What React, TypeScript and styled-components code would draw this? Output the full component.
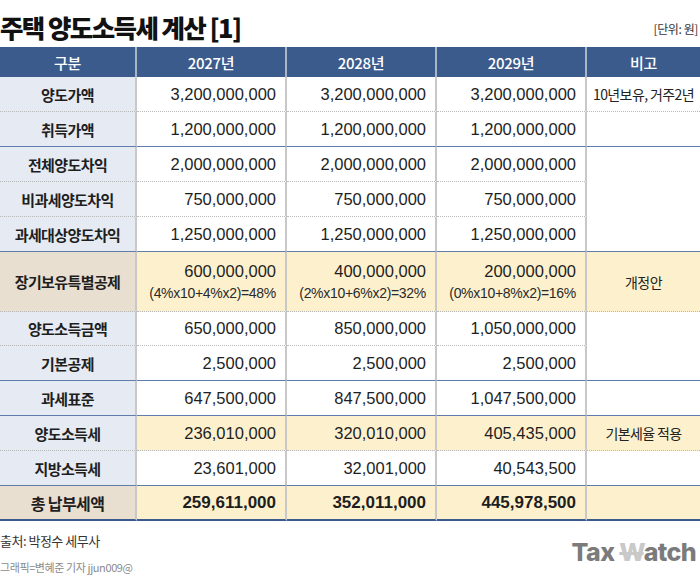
import React from 'react';
import styled, { createGlobalStyle } from 'styled-components';

const GlobalStyle = createGlobalStyle`
    body {
        margin: 0;
        background: #fff;
        font-family: 'Liberation Sans', 'Noto Sans CJK KR', sans-serif;
        color: #222;
    }
`;

const Page = styled.div`
    width: 700px;
    height: 587px;
    overflow: hidden;
    background: #fff;
`;

const TitleBar = styled.div`
    height: 47px;
    display: flex;
    align-items: flex-end;
    justify-content: space-between;
    box-sizing: border-box;
    padding-bottom: 8px;
`;

const Title = styled.h1`
    margin: 0;
    font-family: 'Noto Sans CJK KR', sans-serif;
    font-size: 25.5px;
    font-weight: 900;
    letter-spacing: -1.6px;
    line-height: 1;
    color: #111;
`;

const Unit = styled.span`
    font-family: 'Noto Sans CJK KR', sans-serif;
    font-size: 12px;
    letter-spacing: -0.4px;
    color: #333;
    padding-right: 2px;
    margin-bottom: 2px;
`;

const Grid = styled.div`
    display: grid;
    grid-template-columns: 137px 150px 150px 150px 113px;
    grid-template-rows: 30px 35px 35px 35px 35px 35px 60px 34px 35px 35px 35px 35px 35px;
`;

const HeadCell = styled.div<{ $last?: boolean }>`
    background: #3c5b8d;
    color: #fff;
    font-family: 'Noto Sans CJK KR', sans-serif;
    font-size: 15px;
    font-weight: 500;
    letter-spacing: -0.3px;
    display: flex;
    align-items: center;
    justify-content: center;
    box-sizing: border-box;
    border-right: ${(p) => (p.$last ? 'none' : '2px solid #aab5c6')};
`;

type Line = 'dot' | 'blue' | 'end';
type Tone = 'plain' | 'label' | 'beige' | 'yellow';

const lineStyle = (l: Line) =>
    l === 'dot' ? '1px dotted #b9b9b9' : l === 'blue' ? '1.5px solid #5f7cab' : '2px solid #3c5b8d';

const toneBg = (t: Tone) =>
    t === 'label' ? '#e6ebf3' : t === 'beige' ? '#e9dfd0' : t === 'yellow' ? '#fdf1cd' : '#fff';

const Cell = styled.div<{ $line: Line; $tone: Tone; $last?: boolean; $span?: number }>`
    box-sizing: border-box;
    background: ${(p) => toneBg(p.$tone)};
    border-bottom: ${(p) => lineStyle(p.$line)};
    border-right: ${(p) => (p.$last ? 'none' : '2px solid #c8c8c8')};
    grid-row: ${(p) => (p.$span ? `span ${p.$span}` : 'auto')};
    display: flex;
    flex-direction: column;
    justify-content: center;
`;

const Label = styled(Cell)<{ $strong?: boolean }>`
    align-items: center;
    font-family: 'Noto Sans CJK KR', sans-serif;
    font-size: ${(p) => (p.$strong ? '16px' : '15px')};
    font-weight: 700;
    letter-spacing: -0.6px;
    color: #1e1e1e;
`;

const NumCell = styled(Cell)<{ $bold?: boolean }>`
    align-items: flex-end;
    padding-right: 9px;
    font-size: ${(p) => (p.$bold ? '17px' : '16.5px')};
    font-weight: ${(p) => (p.$bold ? 700 : 400)};
    color: #1e1e1e;
`;

const Formula = styled.span`
    font-size: 14px;
    letter-spacing: -0.3px;
    margin-top: 4px;
    color: #2a2a2a;
`;

const Note = styled(Cell)`
    align-items: center;
    font-family: 'Noto Sans CJK KR', 'Liberation Sans', sans-serif;
    font-size: 14px;
    letter-spacing: -0.6px;
    color: #222;
    white-space: nowrap;
`;

const Footer = styled.div`
    display: grid;
    grid-template-columns: 1fr auto;
    align-items: end;
    padding-top: 10px;
`;

const Credits = styled.div`
    display: flex;
    flex-direction: column;
    gap: 9px;
`;

const Source = styled.span`
    font-family: 'Noto Sans CJK KR', sans-serif;
    font-size: 13px;
    letter-spacing: -0.5px;
    color: #333;
`;

const Byline = styled.span`
    font-family: 'Noto Sans CJK KR', sans-serif;
    font-size: 11px;
    letter-spacing: -0.4px;
    color: #8a8a8a;
`;

const Logo = styled.div`
    font-family: 'Inter', 'Liberation Sans', sans-serif;
    font-size: 25px;
    font-weight: 800;
    letter-spacing: -0.6px;
    color: #7b7b7b;
    line-height: 1;
    padding: 0 4px 10px 0;
    white-space: pre;
`;

const LogoW = styled.span`
    color: #c9c9c9;
    text-decoration: line-through;
    text-decoration-thickness: 3px;
    text-decoration-color: #c9c9c9;
`;

type Row = {
    label: string;
    values: string[];
    line: Line;
    labelTone: Tone;
    tone: Tone;
    formulas?: string[];
    bold?: boolean;
    note?: { text: string; span?: number; line: Line } | null;
};

const rows: Row[] = [
    { label: '양도가액', values: ['3,200,000,000', '3,200,000,000', '3,200,000,000'], line: 'dot', labelTone: 'label', tone: 'plain', note: { text: '10년보유, 거주2년', line: 'dot' } },
    { label: '취득가액', values: ['1,200,000,000', '1,200,000,000', '1,200,000,000'], line: 'blue', labelTone: 'label', tone: 'plain', note: { text: '', line: 'blue' } },
    { label: '전체양도차익', values: ['2,000,000,000', '2,000,000,000', '2,000,000,000'], line: 'dot', labelTone: 'label', tone: 'plain', note: { text: '', span: 3, line: 'blue' } },
    { label: '비과세양도차익', values: ['750,000,000', '750,000,000', '750,000,000'], line: 'dot', labelTone: 'label', tone: 'plain', note: null },
    { label: '과세대상양도차익', values: ['1,250,000,000', '1,250,000,000', '1,250,000,000'], line: 'blue', labelTone: 'label', tone: 'plain', note: null },
    {
        label: '장기보유특별공제',
        values: ['600,000,000', '400,000,000', '200,000,000'],
        formulas: ['(4%x10+4%x2)=48%', '(2%x10+6%x2)=32%', '(0%x10+8%x2)=16%'],
        line: 'dot',
        labelTone: 'beige',
        tone: 'yellow',
        note: { text: '개정안', line: 'dot' },
    },
    { label: '양도소득금액', values: ['650,000,000', '850,000,000', '1,050,000,000'], line: 'dot', labelTone: 'label', tone: 'plain', note: { text: '', span: 2, line: 'blue' } },
    { label: '기본공제', values: ['2,500,000', '2,500,000', '2,500,000'], line: 'blue', labelTone: 'label', tone: 'plain', note: null },
    { label: '과세표준', values: ['647,500,000', '847,500,000', '1,047,500,000'], line: 'blue', labelTone: 'label', tone: 'plain', note: { text: '', line: 'blue' } },
    { label: '양도소득세', values: ['236,010,000', '320,010,000', '405,435,000'], line: 'dot', labelTone: 'label', tone: 'yellow', note: { text: '기본세율 적용', line: 'dot' } },
    { label: '지방소득세', values: ['23,601,000', '32,001,000', '40,543,500'], line: 'blue', labelTone: 'label', tone: 'plain', note: { text: '', line: 'blue' } },
    { label: '총 납부세액', values: ['259,611,000', '352,011,000', '445,978,500'], line: 'end', labelTone: 'beige', tone: 'yellow', bold: true, note: { text: '', line: 'end' } },
];

const headers = ['구분', '2027년', '2028년', '2029년', '비고'];

export default function App() {
    return (
        <Page>
            <GlobalStyle />
            <TitleBar>
                <Title>주택 양도소득세 계산 [1]</Title>
                <Unit>[단위: 원]</Unit>
            </TitleBar>
            <Grid>
                {headers.map((h, i) => (
                    <HeadCell key={h} $last={i === headers.length - 1}>
                        {h}
                    </HeadCell>
                ))}
                {rows.map((r) => (
                    <React.Fragment key={r.label}>
                        <Label $line={r.line} $tone={r.labelTone} $strong={r.bold}>
                            {r.label}
                        </Label>
                        {r.values.map((v, i) => (
                            <NumCell key={i} $line={r.line} $tone={r.tone} $bold={r.bold}>
                                {v}
                                {r.formulas && <Formula>{r.formulas[i]}</Formula>}
                            </NumCell>
                        ))}
                        {r.note && (
                            <Note $line={r.note.line} $tone={r.tone} $span={r.note.span} $last>
                                {r.note.text}
                            </Note>
                        )}
                    </React.Fragment>
                ))}
            </Grid>
            <Footer>
                <Credits>
                    <Source>출처: 박정수 세무사</Source>
                    <Byline>그래픽=변혜준 기자 jjun009@</Byline>
                </Credits>
                <Logo>
                    Tax <LogoW>W</LogoW>atch
                </Logo>
            </Footer>
        </Page>
    );
}
